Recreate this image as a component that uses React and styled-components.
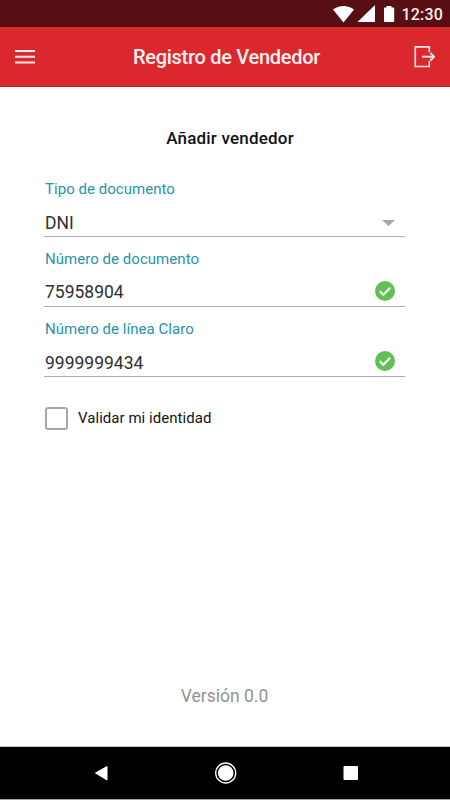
import React from "react";
import styled, { createGlobalStyle } from "styled-components";

const GlobalStyle = createGlobalStyle`
  * { box-sizing: border-box; }
  body { margin: 0; background: #fff; font-family: Roboto, "Liberation Sans", sans-serif; }
`;

const Screen = styled.div`
  display: flex;
  flex-direction: column;
  width: 450px;
  height: 800px;
  overflow: hidden;
  background: #fff;
`;

const StatusBar = styled.div`
  display: flex;
  align-items: center;
  justify-content: flex-end;
  height: 27px;
  padding-right: 7px;
  background: #570f13;
  color: #fbeeee;
`;

const StatusIcons = styled.svg`
  display: block;
  width: 62px;
  height: 27px;
  margin-right: 6px;
  fill: #fff;
`;

const Clock = styled.span`
  font-size: 16px;
  font-weight: 500;
  line-height: 20px;
  letter-spacing: 0.2px;
  padding-top: 3px;
`;

const Header = styled.header`
  display: grid;
  grid-template-columns: 60px 1fr 57px;
  align-items: center;
  height: 60px;
  background: #db282c;
  border-bottom: 1px solid #c32226;
`;

const IconButton = styled.button`
  display: flex;
  padding: 0 0 0 ${(p) => p.$inset}px;
  border: 0;
  background: none;
  color: #fdebeb;
`;

const Title = styled.h1`
  margin: 0;
  text-align: center;
  color: #fff0f0;
  font-size: 20px;
  font-weight: 500;
  line-height: 24px;
  letter-spacing: -0.28px;
`;

const Content = styled.main`
  display: flex;
  flex: 1;
  flex-direction: column;
  padding: 38px 45px 0 44px;
`;

const Subtitle = styled.h2`
  margin: 0 0 26px;
  padding-left: 11px;
  text-align: center;
  color: #111;
  font-size: 17px;
  font-weight: 500;
  line-height: 26px;
  letter-spacing: 0.2px;
`;

const Field = styled.div`
  display: flex;
  flex-direction: column;
  height: 70px;
  padding-top: 3px;
`;

const Label = styled.span`
  padding-left: 1px;
  color: #1f95a6;
  font-size: 15px;
  line-height: 18px;
  letter-spacing: 0.04px;
`;

const Control = styled.div`
  display: flex;
  align-items: center;
  justify-content: space-between;
  height: 39px;
  padding: 8px 10px 0 1px;
  border-bottom: 1px solid #adadad;
  color: #303030;
`;

const Value = styled.span`
  padding-top: ${(p) => p.$drop}px;
  font-size: 17.5px;
  line-height: 24px;
`;

const CheckRow = styled.label`
  display: flex;
  align-items: center;
  gap: 10px;
  margin-top: 19px;
  padding-left: 1px;
  color: #151515;
  font-size: 15px;
  line-height: 24px;
  letter-spacing: 0.04px;
`;

const Box = styled.span`
  width: 23px;
  height: 23px;
  border: 2px solid #a8a8a8;
  border-radius: 3px;
`;

const Version = styled.p`
  margin: auto 0 38px;
  text-align: center;
  color: #929292;
  font-size: 17.5px;
  line-height: 24px;
`;

const NavBar = styled.nav`
  display: flex;
  height: 54px;
  background: #000;
  border-top: 1px solid #c2c9c8;
  border-bottom: 1px solid #a0a0a0;
`;

const NavIcons = styled.svg`
  display: block;
  fill: #fff;
`;

const CaretIcon = styled.svg`
  display: block;
  margin-top: 4px;
`;

const ValidMark = () => (
  <svg width="20" height="20" viewBox="0 0 20 20">
    <circle cx="10" cy="10" r="10" fill="#62bf55" />
    <path d="M4.8 10.2 8.3 13.7 15.2 6.7" fill="none" stroke="#fff" strokeWidth="2.2" />
  </svg>
);

const Caret = () => (
  <CaretIcon width="13" height="6" viewBox="0 0 13 6">
    <path d="M0 0h13L6.5 6z" fill="#a5a5a5" />
  </CaretIcon>
);

const fields = [
  { label: "Tipo de documento", value: "DNI", select: true, drop: 3 },
  { label: "Número de documento", value: "75958904", drop: 1 },
  { label: "Número de línea Claro", value: "9999999434", drop: 3 },
];

export default function App() {
  return (
    <Screen>
      <GlobalStyle />
      <StatusBar>
        <StatusIcons viewBox="333 0 62 27">
          <path d="M333 9.6C339 4.8 348 4.8 354 9.6L343.5 22.6Z" />
          <path d="M375 5V22H357.5Z" />
          <path d="M386.5 6h5v1.4h1.8q.9 0 .9.9v12.8q0 .9-.9.9h-8.4q-.9 0-.9-.9V8.3q0-.9.9-.9h1.6z" />
        </StatusIcons>
        <Clock>12:30</Clock>
      </StatusBar>
      <Header>
        <IconButton $inset={15} aria-label="Menú">
          <svg width="20" height="14" viewBox="0 0 20 14" fill="currentColor">
            <path d="M0 0h20v2H0zM0 5.7h20v2H0zM0 11.5h20v2H0z" />
          </svg>
        </IconButton>
        <Title>Registro de Vendedor</Title>
        <IconButton $inset={21} aria-label="Salir">
          <svg width="22" height="22" viewBox="0 0 22 22" fill="none" stroke="currentColor" strokeWidth="1.6">
            <path d="M15.3 6V.9H1.3v19.600h14V15" />
            <path d="M8 10.7h12" strokeWidth="1.9" />
            <path d="M16.3 6.9 20.1 10.7 16.3 14.5" strokeWidth="1.8" />
          </svg>
        </IconButton>
      </Header>
      <Content>
        <Subtitle>Añadir vendedor</Subtitle>
        {fields.map((f) => (
          <Field key={f.label}>
            <Label>{f.label}</Label>
            <Control>
              <Value $drop={f.drop}>{f.value}</Value>
              {f.select ? <Caret /> : <ValidMark />}
            </Control>
          </Field>
        ))}
        <CheckRow>
          <Box />
          Validar mi identidad
        </CheckRow>
        <Version>Versión 0.0</Version>
      </Content>
      <NavBar>
        <NavIcons width="450" height="52" viewBox="0 747 450 52">
          <path d="M95.5 773 107 766.5V780Z" stroke="#fff" strokeWidth="1" strokeLinejoin="round" />
          <circle cx="225.7" cy="773" r="7.8" />
          <circle cx="225.7" cy="773" r="10" fill="none" stroke="#fff" strokeWidth="1.3" />
          <rect x="343.5" y="766" width="14.5" height="14" rx="1" />
        </NavIcons>
      </NavBar>
    </Screen>
  );
}
